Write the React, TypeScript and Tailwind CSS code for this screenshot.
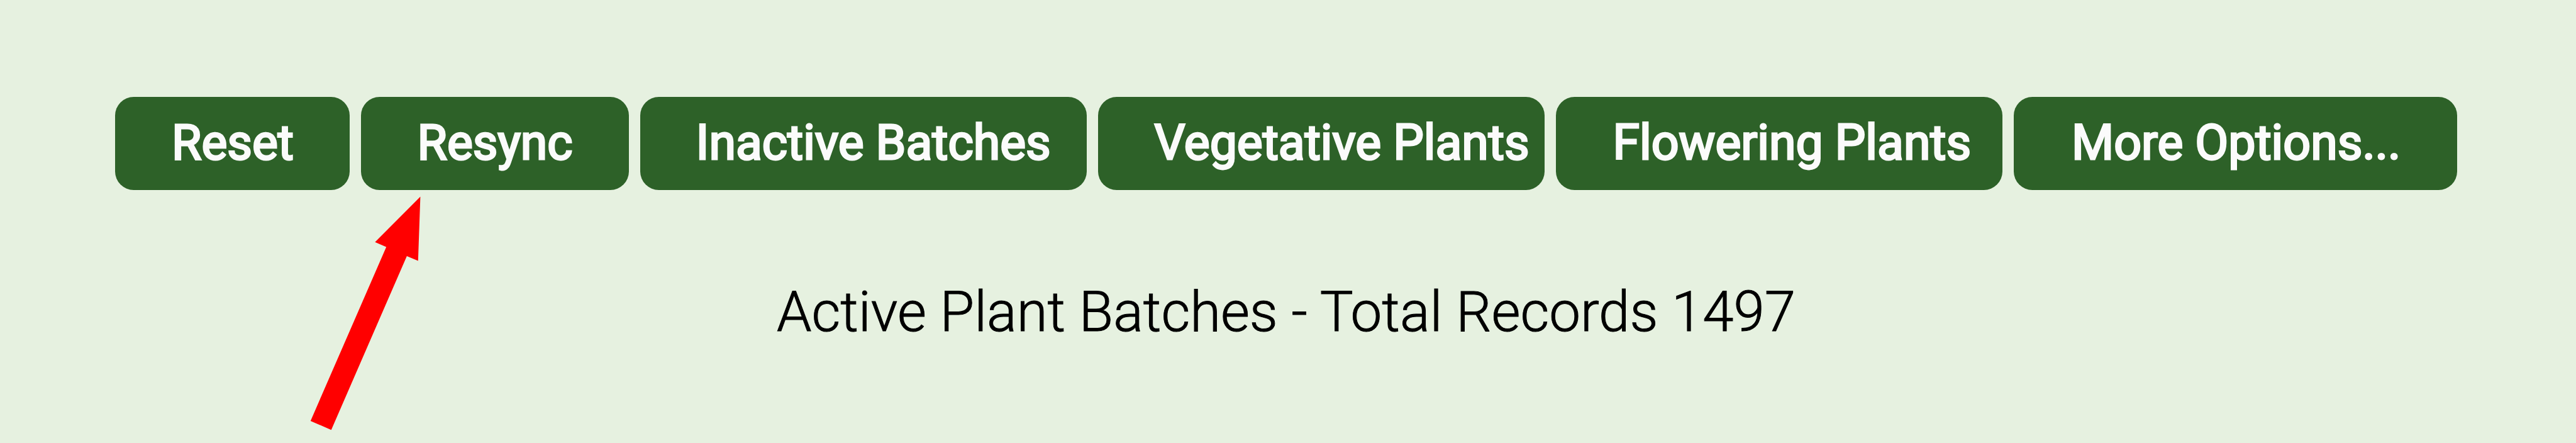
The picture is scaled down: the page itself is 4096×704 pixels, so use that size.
const actions = [
  { label: "Reset", box: "w-[373px] pl-[90px]" },
  { label: "Resync", box: "w-[426px] pl-[89.5px]" },
  { label: "Inactive Batches", box: "w-[710px] pl-[88.5px]" },
  { label: "Vegetative Plants", box: "w-[710px] pl-[89.5px]" },
  { label: "Flowering Plants", box: "w-[710px] pl-[90.5px]" },
  { label: "More Options...", box: "w-[705px] pl-[92px]" },
];

function Arrow() {
  return (
    <svg
      className="pointer-events-none absolute left-[480px] top-[304px] h-[388px] w-[200px]"
      viewBox="0 0 200 388"
      aria-hidden="true"
    >
      <polygon
        fill="#ff0000"
        points="188.4,8.6 184.8,110.4 166.9,102.9 46.7,379.2 13.8,364.9 134.2,88.6 116.3,80.8"
      />
    </svg>
  );
}

export default function App() {
  return (
    <main className="relative flex h-[704px] w-[4096px] flex-col overflow-hidden bg-[#e6f1e0] pt-[154px] font-['Roboto',sans-serif]">
      <nav className="ml-[183px] flex gap-[18px]">
        {actions.map(({ label, box }) => (
          <button
            key={label}
            type="button"
            className={`flex h-[148px] flex-none items-center whitespace-nowrap rounded-[29.6px] bg-[#2d6128] pb-[2px] text-left text-[76.95px] leading-[90px] font-normal text-[#fbfbfb] [-webkit-text-stroke:3px_#fbfbfb] ${box}`}
          >
            {label}
          </button>
        ))}
      </nav>
      <h1 className="mt-[142px] pl-[1235px] text-[88.8px] leading-[104px] font-light whitespace-nowrap text-black [-webkit-text-stroke:1px_black]">
        Active Plant Batches - Total Records 1497
      </h1>
      <Arrow />
    </main>
  );
}
